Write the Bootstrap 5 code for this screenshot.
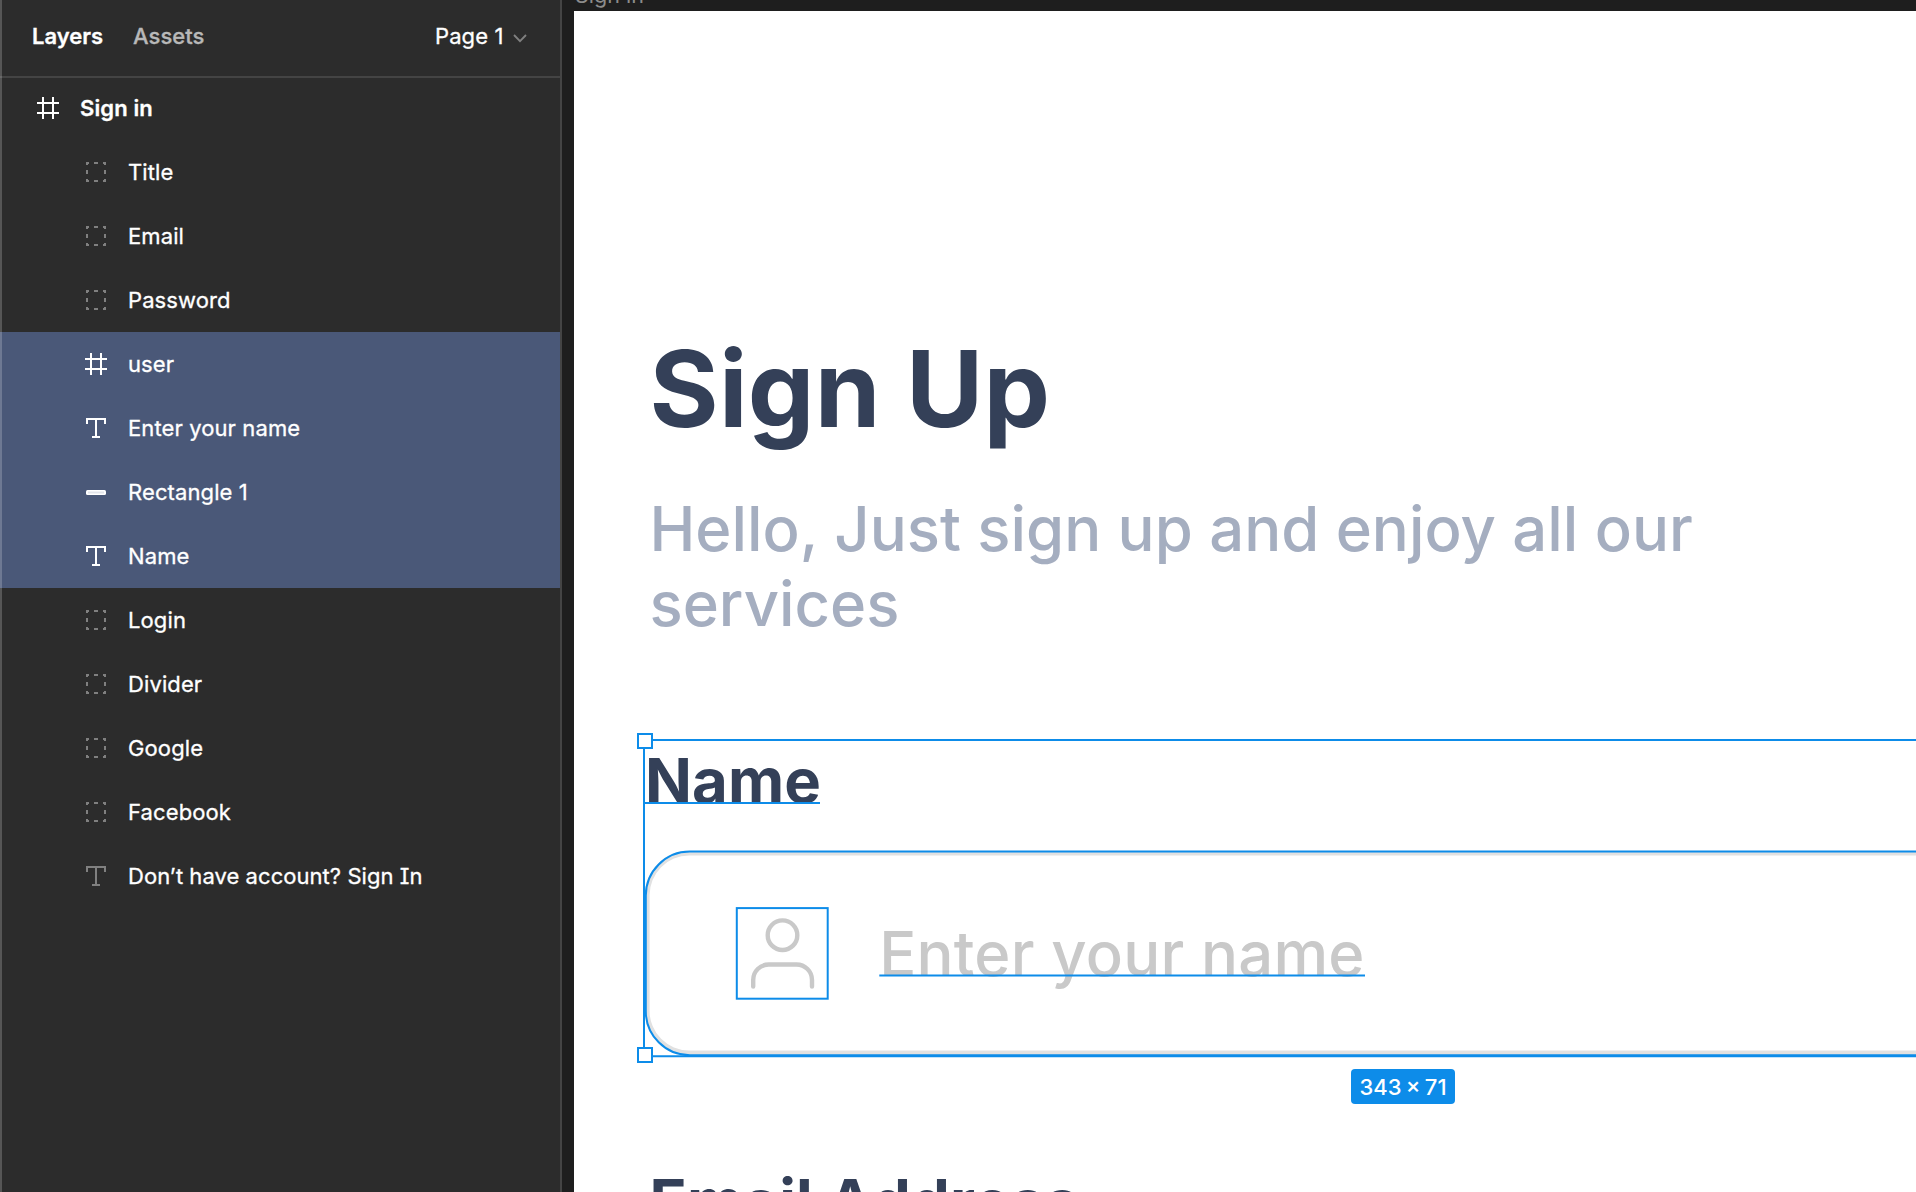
<!DOCTYPE html>
<html lang="en" data-bs-theme="light">
<head>
<meta charset="utf-8">
<meta name="viewport" content="width=device-width, initial-scale=1">
<title>Sign in – Layers</title>
<link href="https://cdn.jsdelivr.net/npm/bootstrap@5.3.0/dist/css/bootstrap.min.css" rel="stylesheet">
<style>
  body { font-family: Inter, "Liberation Sans", sans-serif; background: #1e1e1e; color: #fff; font-size: 22px; line-height: 28px; }

  /* Layers panel */
  .panel { width: 562px; background: #2c2c2c; border-right: 2px solid #444; letter-spacing: .11px; -webkit-text-stroke: .3px currentColor; }
  .panel::before { content: ""; position: absolute; inset: 0 auto 0 0; width: 2px; background: rgba(255,255,255,.2); z-index: 1; }
  .panel-head { height: 78px; padding: 0 33px 4px 32px; border-bottom: 2px solid #444; }
  .panel-tabs { gap: 30px; letter-spacing: 0; }
  .tab-idle { color: #b8b8b8; }
  .page-pick { gap: 9.500px; }
  .layer-list { margin-top: -2px; }
  .layer { height: 64px; padding-left: 85px; gap: 21px; }
  .layer-root { padding-left: 37px; }
  .layer svg { width: 22px; height: 22px; flex: none; }
  .layer-on { background: #4a5878; }
  .glyph-dim { color: #808080; }
  .serif-i { font-feature-settings: "cv08"; letter-spacing: .05px; }

  /* Canvas */
  .frame-label { margin: -17px 0 4px 1px; line-height: 24px; color: #8c8c8c; font-size: 21.500px; }
  .stage { padding-left: 12px; }
  .artboard { background: #fff; padding: 314.300px 0 0 75.5px; color: #344058; white-space: nowrap; }
  .title { font-size: 105.6px; line-height: 128px; margin-bottom: 37.500px; letter-spacing: .25px; }
  .subtitle { font-size: 61.6px; line-height: 75px; color: #a5aec0; }
  .field-label { font-size: 61.6px; line-height: 75px; letter-spacing: .1px; }
  .selection { margin: 99px 0 108px -5.5px; padding: 3.500px 0 0 1px; height: 316.3px; width: 1522px; }
  .entry { margin-top: 32.800px; height: 204px; width: 1520px; border-radius: 44px; box-shadow: inset 0 0 0 4.6px #e1e1e1; padding-left: 91.500px; gap: 51.700px; font-size: 61.6px; line-height: 75px; color: #c9c9c9; letter-spacing: .19px; }
  .entry svg { width: 91px; height: 91px; flex: none; }
  .outlines { position: absolute; left: 0; top: 0; overflow: visible; stroke: #0d8ce9; stroke-width: 2; fill: none; }
  .size-tag { position: absolute; left: 707px; top: 329.5px; width: 104px; height: 34.5px; border-radius: 4px; background: #0d8ce9; color: #fff; font-size: 22px; word-spacing: -1.500px; }
</style>
</head>
<body class="vh-100 overflow-hidden">
<svg class="d-none">
  <symbol id="i-frame" viewBox="0 0 22 22"><path d="M6 0v22M16 0v22M0 6h22M0 16h22" fill="none" stroke="currentColor" stroke-width="2"/></symbol>
  <symbol id="i-group" viewBox="0 0 22 22"><path d="M1 1h3v2h-1v1h-2zM9 1h4v2h-4zM18 1h3v3h-2v-1h-1zM1 9h2v4h-2zM19 9h2v4h-2zM1 18h2v1h1v2h-3zM9 19h4v2h-4zM19 18h2v3h-3v-2h1z" fill="currentColor"/></symbol>
  <symbol id="i-text" viewBox="0 0 22 22"><path d="M1 1h20v6h-2v-4h-7v16h3v2h-8v-2h3v-16h-7v4h-2z" fill="currentColor"/></symbol>
  <symbol id="i-rect" viewBox="0 0 22 22"><rect x="1" y="9" width="20" height="5" rx="1.5" fill="#fff"/><path d="M3 11.5h16" stroke="#e2e4ea" stroke-width="2"/></symbol>
</svg>

<div class="d-flex h-100">
  <aside class="panel position-relative flex-shrink-0">
    <header class="panel-head d-flex align-items-center justify-content-between">
      <div class="panel-tabs d-flex">
        <span class="fw-semibold">Layers</span>
        <span class="tab-idle fw-medium">Assets</span>
      </div>
      <div class="page-pick d-flex align-items-center">
        <span>Page 1</span>
        <svg width="14" height="9" viewBox="0 0 14 9" class="mt-1"><path d="M1 1l6 6.200 6-6.200" fill="none" stroke="#808080" stroke-width="1.800"/></svg>
      </div>
    </header>
    <ul class="layer-list list-unstyled mb-0">
      <li class="layer layer-root d-flex align-items-center fw-semibold"><svg><use href="#i-frame"/></svg><span>Sign in</span></li>
      <li class="layer d-flex align-items-center"><svg class="glyph-dim"><use href="#i-group"/></svg><span>Title</span></li>
      <li class="layer d-flex align-items-center"><svg class="glyph-dim"><use href="#i-group"/></svg><span>Email</span></li>
      <li class="layer d-flex align-items-center"><svg class="glyph-dim"><use href="#i-group"/></svg><span>Password</span></li>
      <li class="layer layer-on d-flex align-items-center"><svg><use href="#i-frame"/></svg><span>user</span></li>
      <li class="layer layer-on d-flex align-items-center"><svg><use href="#i-text"/></svg><span>Enter your name</span></li>
      <li class="layer layer-on d-flex align-items-center"><svg><use href="#i-rect"/></svg><span>Rectangle 1</span></li>
      <li class="layer layer-on d-flex align-items-center"><svg><use href="#i-text"/></svg><span>Name</span></li>
      <li class="layer d-flex align-items-center"><svg class="glyph-dim"><use href="#i-group"/></svg><span>Login</span></li>
      <li class="layer d-flex align-items-center"><svg class="glyph-dim"><use href="#i-group"/></svg><span>Divider</span></li>
      <li class="layer d-flex align-items-center"><svg class="glyph-dim"><use href="#i-group"/></svg><span>Google</span></li>
      <li class="layer d-flex align-items-center"><svg class="glyph-dim"><use href="#i-group"/></svg><span>Facebook</span></li>
      <li class="layer d-flex align-items-center"><svg class="glyph-dim"><use href="#i-text"/></svg><span class="serif-i">Don’t have account? Sign In</span></li>
    </ul>
  </aside>

  <main class="stage d-flex flex-column flex-grow-1 overflow-hidden">
    <div class="frame-label">Sign in</div>
    <section class="artboard flex-grow-1">
      <h1 class="title fw-bold">Sign Up</h1>
      <p class="subtitle fw-medium mb-0">Hello, Just sign up and enjoy all our<br>services</p>

      <div class="selection position-relative">
        <div class="field-label fw-bold">Name</div>
        <div class="entry d-flex align-items-center fw-medium">
          <svg viewBox="0 0 91 91" fill="none" stroke="#c9c9c9" stroke-width="4.400" stroke-linecap="round"><circle cx="45.500" cy="27.200" r="14.800"/><path d="M16.200 78.500V72a15.500 15.500 0 0 1 15.500-15.500H59.500A15.500 15.500 0 0 1 75 72v6.500"/></svg>
          <span>Enter your name</span>
        </div>
        <svg class="outlines" width="1522" height="316">
          <path d="M0 316V0H1522M0 316.200H1522"/>
          <rect x="1.800" y="111.600" width="1520" height="203.600" rx="44"/>
          <path d="M0 63H176M235.300 235.500H721"/>
          <rect x="92.800" y="168.100" width="90.900" height="90.600"/>
          <rect x="-6" y="-6" width="14" height="14" fill="#fff"/>
          <rect x="-6" y="308" width="14" height="14" fill="#fff"/>
        </svg>
        <div class="size-tag d-flex align-items-center justify-content-center fw-medium">343 × 71</div>
      </div>

      <div class="field-label fw-bold">Email Address</div>
    </section>
  </main>
</div>
<script src="https://cdn.jsdelivr.net/npm/bootstrap@5.3.0/dist/js/bootstrap.bundle.min.js"></script>
</body>
</html>
